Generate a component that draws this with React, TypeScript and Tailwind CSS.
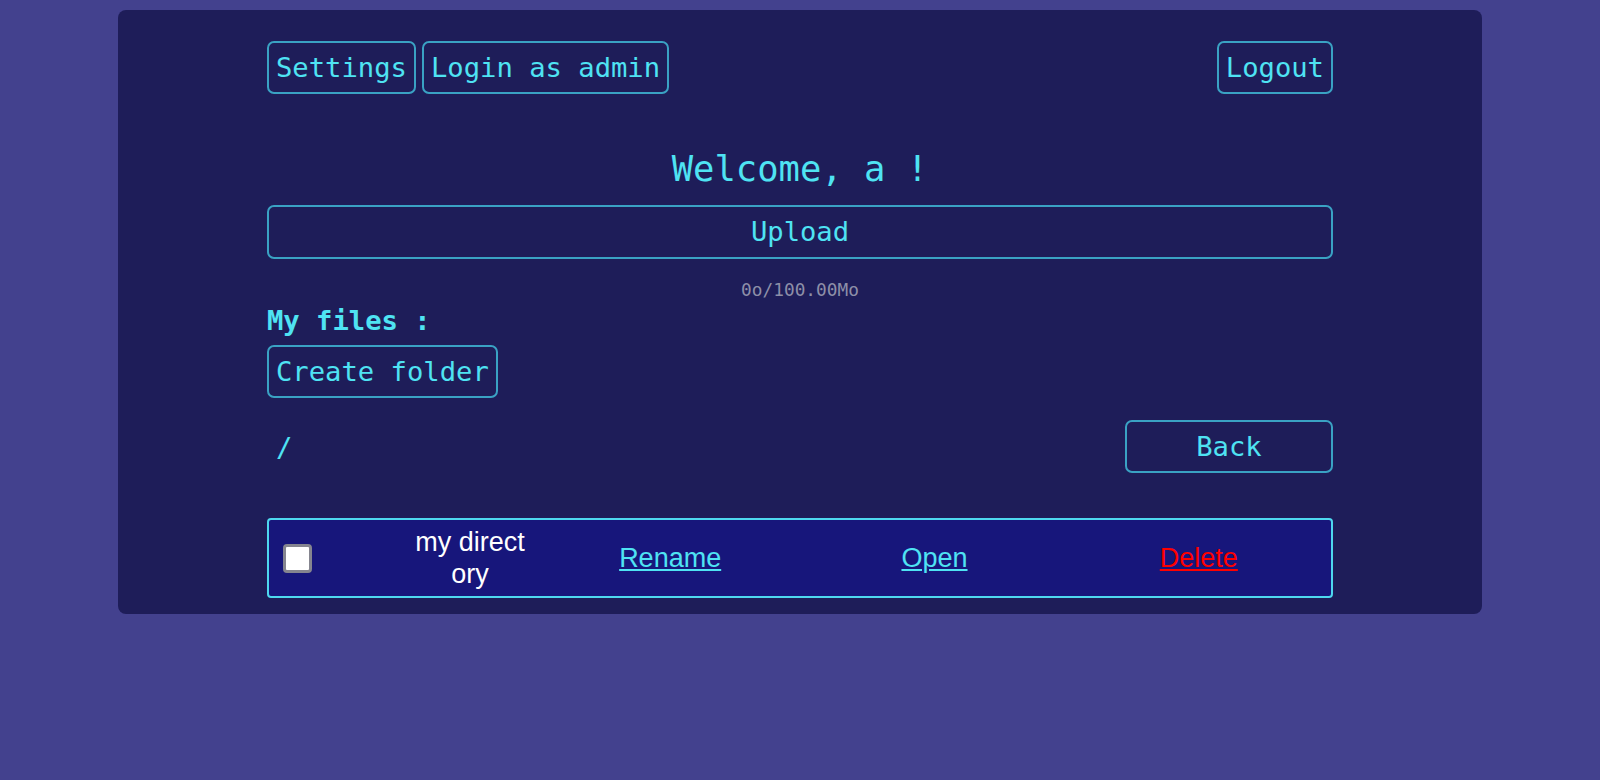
import React from 'react';

const mono = "font-['DejaVu_Sans_Mono',monospace]";
const btn =
  'h-[53px] flex items-center justify-center border-2 border-[#3aa2c4] rounded-[7px] px-[7px] text-[27.2px] text-[#4fe3f3] leading-none';

export default function App() {
  return (
    <div className="min-h-[780px] w-full bg-[#43418e] pt-[10px]">
      <div className={`mx-auto w-[1364px] rounded-lg bg-[#1e1d59] pt-[31px] pb-[16px] ${mono}`}>
        <div className="mx-auto w-[1066px]">
          {/* Top bar */}
          <div className="flex items-center justify-between">
            <div className="flex gap-[6px]">
              <button className={btn}>Settings</button>
              <button className={btn}>Login as admin</button>
            </div>
            <button className={btn}>Logout</button>
          </div>

          <h1 className="mt-[55px] text-center text-[35.5px] leading-[40px] text-[#4fe3f3]">Welcome, a !</h1>

          <button className={`${btn} mt-[16px] w-full !h-[54px]`}>Upload</button>

          <p className="mt-[21px] text-center text-[17.8px] leading-[20px] text-[#8d8fa8]">0o/100.00Mo</p>

          <h2 className="mt-[10px] text-[27.2px] font-bold leading-[22px] text-[#4fe3f3]">My files :</h2>

          <button className={`${btn} mt-[13px]`}>Create folder</button>

          {/* Path + back */}
          <div className="mt-[22px] flex items-center justify-between">
            <span className="pl-[9px] pt-[4px] text-[27.2px] text-[#4fe3f3]">/</span>
            <button className={`${btn} w-[208px]`}>Back</button>
          </div>

          {/* File row */}
          <div className="mt-[45px] flex h-[80px] items-center rounded-[4px] border-2 border-[#4ed8ef] bg-[#17167b] font-['Liberation_Sans',Arial,sans-serif] text-[27px]">
            <input
              type="checkbox"
              className="ml-[14px] h-[29px] w-[29px] shrink-0 appearance-none rounded-[4px] border-[3px] border-[#85858f] bg-white"
            />
            <div className="ml-[100px] w-[116px] shrink-0 break-all text-center leading-[32px] text-white">
              my directory
            </div>
            <div className="ml-[10px] flex flex-1">
              <a href="#" className="flex-1 text-center text-[#4fe3f3] underline">Rename</a>
              <a href="#" className="flex-1 text-center text-[#4fe3f3] underline">Open</a>
              <a href="#" className="flex-1 text-center text-[#ff0000] underline">Delete</a>
            </div>
          </div>
        </div>
      </div>
    </div>
  );
}
